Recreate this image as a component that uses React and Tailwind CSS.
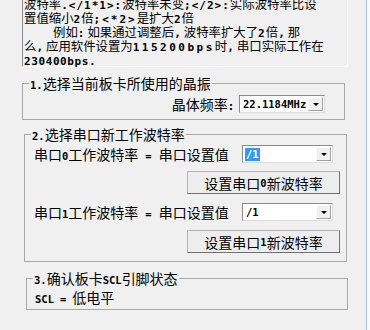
import React from 'react';

const cjk = { fontFamily: '"Noto Sans CJK SC", "Noto Sans", sans-serif' };

// small bold ascii bits, like the old bitmap font in the dialog
function A({ children, className = 'text-[10.5px]' }) {
  return (
    <span className={`font-['DejaVu_Sans_Mono',monospace] font-bold leading-[0] ${className}`}>
      {children}
    </span>
  );
}

function Combo({ value, selected, width }) {
  return (
    <div className={`${width} h-[18px] flex bg-white border border-[#8a8a8a] border-r-[#dcdcdc] border-b-[#dcdcdc]`}>
      <div className="flex-1 flex items-center pl-[2px] leading-[14px]">
        <A className={selected ? 'text-[10.5px] bg-[#3399ff] text-white px-[1px] leading-[13px]' : 'text-[10.5px] text-black px-[1px]'}>{value}</A>
      </div>
      <div className="w-[15px] m-px bg-[#f0f0f0] border border-[#fff] border-r-[#a0a0a0] border-b-[#a0a0a0] flex items-center justify-center">
        <div className="w-0 h-0 border-l-[3px] border-r-[3px] border-t-[3px] border-l-transparent border-r-transparent border-t-black" />
      </div>
    </div>
  );
}

function Button({ children }) {
  return (
    <div className="w-[153px] h-[23px] bg-[#ededed] border border-[#b4b4b4] border-r-[#707070] border-b-[#707070] flex items-center justify-center text-[14px] leading-[18px] text-black">
      {children}
    </div>
  );
}

function Group({ title, className, children }) {
  return (
    <div className={`border border-[#a8a8a8] ${className}`}>
      <div className="-mt-[8px] ml-[6px] px-[1px] w-fit h-[14px] leading-[14px] text-[14px] text-black bg-[#f0f0f0] whitespace-nowrap">
        {title}
      </div>
      {children}
    </div>
  );
}

export default function App() {
  return (
    <div className="w-[370px] h-[330px] bg-[#f0f0f0] flex overflow-hidden" style={cjk}>
      <div className="w-[366px] pl-[22px] flex flex-col">
        {/* note text */}
        <div className="w-[326px] h-[70px] -mt-[3px] shrink-0 border-l border-[#8c8c8c] border-r border-r-white border-b border-b-white pl-px text-[12.4px] leading-[14px] text-black whitespace-nowrap">
          <div className="h-[14px]">波特率<A className="text-[11px] tracking-[1px]">.&lt;/1*1&gt;:</A>波特率未变<A className="text-[11px] tracking-[1px]">;&lt;/2&gt;:</A>实际波特率比设</div>
          <div className="h-[14px]">置值缩小<A className="text-[11px] tracking-[1px]">2</A>倍<A className="text-[11px] tracking-[2px]">;&lt;*2&gt;</A>是扩大<A className="text-[11px] tracking-[1px]">2</A>倍</div>
          <div className="h-[14px]"><span className="inline-block w-[29px]" />例如<A className="text-[11px] tracking-[3px]">:</A>如果通过调整后<A className="text-[11px] tracking-[3px]">,</A>波特率扩大了<A className="text-[11px] tracking-[1px]">2</A>倍<A className="text-[11px] tracking-[3px]">,</A>那</div>
          <div className="h-[14px]">么<A className="text-[11px] tracking-[3px]">,</A>应用软件设置为<A className="text-[11px] tracking-[2.5px]">115200bps</A>时<A className="text-[11px] tracking-[3px]">,</A>串口实际工作在</div>
          <div className="h-[14px]"><A className="text-[11px] tracking-[0.6px]">230400bps.</A></div>
        </div>

        <Group title={<><A>1.</A>选择当前板卡所使用的晶振</>} className="w-[323px] mt-[16px] pb-[6px]">
          <div className="mt-[5px] h-[18px] flex items-center justify-end pr-[19px] gap-[5px]">
            <span className="text-[14px] leading-[18px]">晶体频率<A>:</A></span>
            <Combo value="22.1184MHz" width="w-[86px]" />
          </div>
        </Group>

        <Group title={<><A>2.</A>选择串口新工作波特率</>} className="w-[323px] ml-[2px] mt-[14px] pb-[8px]">
          <div className="mt-[4px] h-[18px] flex items-center justify-between pl-[9px] pr-[13px]">
            <span className="text-[14px] leading-[18px] whitespace-nowrap">串口<A>0</A>工作波特率<A className="text-[10.5px] px-[7px]">=</A>串口设置值</span>
            <Combo value="/1" selected width="w-[91px]" />
          </div>
          <div className="mt-[8px] flex justify-end pr-[6px]">
            <Button>设置串口<A>0</A>新波特率</Button>
          </div>
          <div className="mt-[9px] h-[18px] flex items-center justify-between pl-[9px] pr-[13px]">
            <span className="text-[14px] leading-[18px] whitespace-nowrap">串口<A>1</A>工作波特率<A className="text-[10.5px] px-[7px]">=</A>串口设置值</span>
            <Combo value="/1" width="w-[91px]" />
          </div>
          <div className="mt-[9px] flex justify-end pr-[6px]">
            <Button>设置串口<A>1</A>新波特率</Button>
          </div>
        </Group>

        <Group title={<><A>3.</A>确认板卡<A>SCL</A>引脚状态</>} className="w-[322px] ml-[4px] mt-[16px] pb-[4px]">
          <div className="mt-[4px] h-[16px] pl-[8px] text-[14px] leading-[16px] whitespace-nowrap">
            <A>SCL</A><A className="text-[10.5px] px-[6px]">=</A>低电平
          </div>
        </Group>
      </div>
      <div className="w-px bg-[#a9c4e0]" />
      <div className="flex-1 bg-[#f7f9fc]" />
    </div>
  );
}
